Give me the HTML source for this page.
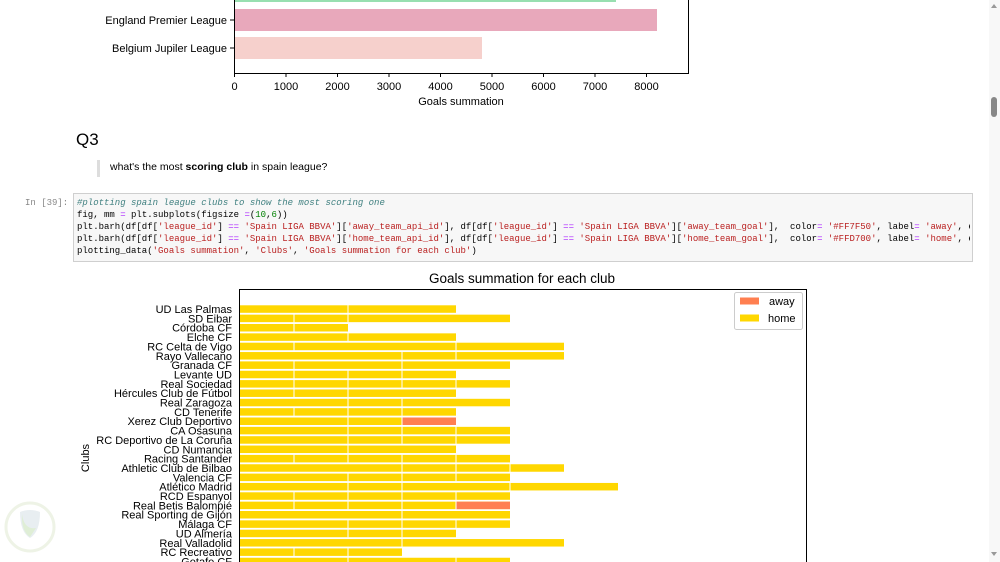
<!DOCTYPE html>
<html><head><meta charset="utf-8"><style>
html,body{margin:0;padding:0;background:#fff;width:1000px;height:562px;overflow:hidden;font-family:"Liberation Sans",sans-serif}
.a{position:absolute;white-space:pre}
.code{font-family:"Liberation Mono",monospace;font-size:9px;line-height:12px;color:#000}
.cm{color:#408080;font-style:italic}.s{color:#ba2121}.o{color:#aa22ff}.n{color:#008000}
</style></head><body>
<svg class="a" style="left:0;top:0" width="1000" height="562" font-family="Liberation Sans, sans-serif">
<rect x="235" y="-20" width="381" height="22" fill="#98dfb0"/>
<rect x="235" y="9" width="422" height="22" fill="#e8a8bb"/>
<rect x="235" y="37" width="247" height="22" fill="#f6d0cc"/>
<line x1="234.5" y1="0" x2="234.5" y2="73" stroke="#000" stroke-width="1"/>
<line x1="688.5" y1="0" x2="688.5" y2="73" stroke="#000" stroke-width="1"/>
<line x1="234" y1="73.5" x2="689" y2="73.5" stroke="#000" stroke-width="1"/>
<g stroke="#000"><line x1="230" y1="20" x2="234" y2="20"/><line x1="230" y1="48" x2="234" y2="48"/>
<line x1="234.5" y1="74" x2="234.5" y2="77"/><line x1="286" y1="74" x2="286" y2="77"/><line x1="337.5" y1="74" x2="337.5" y2="77"/><line x1="389" y1="74" x2="389" y2="77"/><line x1="440.5" y1="74" x2="440.5" y2="77"/><line x1="492" y1="74" x2="492" y2="77"/><line x1="543.5" y1="74" x2="543.5" y2="77"/><line x1="595" y1="74" x2="595" y2="77"/><line x1="646.5" y1="74" x2="646.5" y2="77"/></g>
<g font-size="11" text-anchor="end" fill="#000"><text x="227" y="24">England Premier League</text><text x="227" y="52">Belgium Jupiler League</text></g>
<g font-size="11" text-anchor="middle"><text x="234.5" y="90">0</text><text x="286" y="90">1000</text><text x="337.5" y="90">2000</text><text x="389" y="90">3000</text><text x="440.5" y="90">4000</text><text x="492" y="90">5000</text><text x="543.5" y="90">6000</text><text x="595" y="90">7000</text><text x="646.5" y="90">8000</text>
<text x="461" y="105">Goals summation</text></g>
<text x="522" y="283" font-size="13.5" text-anchor="middle">Goals summation for each club</text>
<rect x="239.5" y="289.5" width="567" height="290" fill="none" stroke="#000"/>
<g font-size="11" text-anchor="end">
<g transform="translate(0,309)"><rect x="240" y="-3.7" width="216" height="7.5" fill="#ffd700"/><path d="M348 -4V4" stroke="#fff"/><text x="232" y="4">UD Las Palmas</text></g>
<g transform="translate(0,318.35)"><rect x="240" y="-3.7" width="270" height="7.5" fill="#ffd700"/><path d="M294 -4V4M348 -4V4" stroke="#fff"/><text x="232" y="4">SD Eibar</text></g>
<g transform="translate(0,327.7)"><rect x="240" y="-3.7" width="108" height="7.5" fill="#ffd700"/><path d="M294 -4V4" stroke="#fff"/><text x="232" y="4">Córdoba CF</text></g>
<g transform="translate(0,337.05)"><rect x="240" y="-3.7" width="216" height="7.5" fill="#ffd700"/><path d="M348 -4V4" stroke="#fff"/><text x="232" y="4">Elche CF</text></g>
<g transform="translate(0,346.4)"><rect x="240" y="-3.7" width="324" height="7.5" fill="#ffd700"/><path d="M294 -4V4M456 -4V4" stroke="#fff"/><text x="232" y="4">RC Celta de Vigo</text></g>
<g transform="translate(0,355.75)"><rect x="240" y="-3.7" width="324" height="7.5" fill="#ffd700"/><path d="M402 -4V4M456 -4V4" stroke="#fff"/><text x="232" y="4">Rayo Vallecano</text></g>
<g transform="translate(0,365.1)"><rect x="240" y="-3.7" width="270" height="7.5" fill="#ffd700"/><path d="M294 -4V4M402 -4V4" stroke="#fff"/><text x="232" y="4">Granada CF</text></g>
<g transform="translate(0,374.45)"><rect x="240" y="-3.7" width="216" height="7.5" fill="#ffd700"/><path d="M294 -4V4M348 -4V4M402 -4V4" stroke="#fff"/><text x="232" y="4">Levante UD</text></g>
<g transform="translate(0,383.8)"><rect x="240" y="-3.7" width="270" height="7.5" fill="#ffd700"/><path d="M294 -4V4M348 -4V4M402 -4V4M456 -4V4" stroke="#fff"/><text x="232" y="4">Real Sociedad</text></g>
<g transform="translate(0,393.15)"><rect x="240" y="-3.7" width="216" height="7.5" fill="#ffd700"/><path d="M294 -4V4M348 -4V4" stroke="#fff"/><text x="232" y="4">Hércules Club de Fútbol</text></g>
<g transform="translate(0,402.5)"><rect x="240" y="-3.7" width="270" height="7.5" fill="#ffd700"/><path d="M348 -4V4M402 -4V4" stroke="#fff"/><text x="232" y="4">Real Zaragoza</text></g>
<g transform="translate(0,411.85)"><rect x="240" y="-3.7" width="216" height="7.5" fill="#ffd700"/><path d="M294 -4V4M348 -4V4M402 -4V4" stroke="#fff"/><text x="232" y="4">CD Tenerife</text></g>
<g transform="translate(0,421.2)"><rect x="240" y="-3.7" width="216" height="7.5" fill="#ffd700"/><rect x="402" y="-3.7" width="54" height="7.5" fill="#ff7f50"/><path d="M348 -4V4M402 -4V4" stroke="#fff"/><text x="232" y="4">Xerez Club Deportivo</text></g>
<g transform="translate(0,430.55)"><rect x="240" y="-3.7" width="270" height="7.5" fill="#ffd700"/><path d="M348 -4V4M402 -4V4M456 -4V4" stroke="#fff"/><text x="232" y="4">CA Osasuna</text></g>
<g transform="translate(0,439.9)"><rect x="240" y="-3.7" width="270" height="7.5" fill="#ffd700"/><path d="M348 -4V4M402 -4V4M456 -4V4" stroke="#fff"/><text x="232" y="4">RC Deportivo de La Coruña</text></g>
<g transform="translate(0,449.25)"><rect x="240" y="-3.7" width="216" height="7.5" fill="#ffd700"/><path d="M348 -4V4" stroke="#fff"/><text x="232" y="4">CD Numancia</text></g>
<g transform="translate(0,458.6)"><rect x="240" y="-3.7" width="270" height="7.5" fill="#ffd700"/><path d="M294 -4V4M348 -4V4M402 -4V4M456 -4V4" stroke="#fff"/><text x="232" y="4">Racing Santander</text></g>
<g transform="translate(0,467.95)"><rect x="240" y="-3.7" width="324" height="7.5" fill="#ffd700"/><path d="M402 -4V4M456 -4V4M510 -4V4" stroke="#fff"/><text x="232" y="4">Athletic Club de Bilbao</text></g>
<g transform="translate(0,477.3)"><rect x="240" y="-3.7" width="270" height="7.5" fill="#ffd700"/><path d="M348 -4V4M402 -4V4M456 -4V4" stroke="#fff"/><text x="232" y="4">Valencia CF</text></g>
<g transform="translate(0,486.65)"><rect x="240" y="-3.7" width="378" height="7.5" fill="#ffd700"/><path d="M348 -4V4M402 -4V4M510 -4V4" stroke="#fff"/><text x="232" y="4">Atlético Madrid</text></g>
<g transform="translate(0,496)"><rect x="240" y="-3.7" width="270" height="7.5" fill="#ffd700"/><path d="M294 -4V4M348 -4V4M402 -4V4M456 -4V4" stroke="#fff"/><text x="232" y="4">RCD Espanyol</text></g>
<g transform="translate(0,505.35)"><rect x="240" y="-3.7" width="270" height="7.5" fill="#ffd700"/><rect x="456" y="-3.7" width="54" height="7.5" fill="#ff7f50"/><path d="M294 -4V4M348 -4V4M402 -4V4M456 -4V4" stroke="#fff"/><text x="232" y="4">Real Betis Balompié</text></g>
<g transform="translate(0,514.7)"><rect x="240" y="-3.7" width="270" height="7.5" fill="#ffd700"/><path d="M402 -4V4" stroke="#fff"/><text x="232" y="4">Real Sporting de Gijón</text></g>
<g transform="translate(0,524.05)"><rect x="240" y="-3.7" width="270" height="7.5" fill="#ffd700"/><path d="M348 -4V4M402 -4V4M456 -4V4" stroke="#fff"/><text x="232" y="4">Málaga CF</text></g>
<g transform="translate(0,533.4)"><rect x="240" y="-3.7" width="216" height="7.5" fill="#ffd700"/><path d="M348 -4V4M402 -4V4" stroke="#fff"/><text x="232" y="4">UD Almería</text></g>
<g transform="translate(0,542.75)"><rect x="240" y="-3.7" width="324" height="7.5" fill="#ffd700"/><path d="M402 -4V4" stroke="#fff"/><text x="232" y="4">Real Valladolid</text></g>
<g transform="translate(0,552.1)"><rect x="240" y="-3.7" width="162" height="7.5" fill="#ffd700"/><path d="M294 -4V4M348 -4V4" stroke="#fff"/><text x="232" y="4">RC Recreativo</text></g>
<g transform="translate(0,561.45)"><rect x="240" y="-3.7" width="270" height="7.5" fill="#ffd700"/><path d="M348 -4V4M456 -4V4" stroke="#fff"/><text x="232" y="4">Getafe CF</text></g>
</g>
<text transform="translate(89,458) rotate(-90)" font-size="11" text-anchor="middle">Clubs</text>
<rect x="734.5" y="292.5" width="68" height="37" rx="2" fill="#fff" stroke="#ccc"/>
<rect x="740" y="297.5" width="19" height="7" fill="#ff7f50"/><text x="769" y="305" font-size="11">away</text>
<rect x="740" y="314.5" width="19" height="7" fill="#ffd700"/><text x="768" y="322" font-size="11">home</text>
<circle cx="30" cy="527" r="24" fill="none" stroke="#eef3e6" stroke-width="3"/>
<path d="M20 512 Q30 508 40 512 Q40 532 30 538 Q20 532 20 512Z" fill="#e8eef1"/>
<path d="M22 514 Q24 530 36 528 Q32 534 30 537 Q21 531 22 514Z" fill="#dfeed6"/>
<rect x="989" y="0" width="11" height="562" fill="#f8f8f8"/>
<rect x="991" y="97" width="6" height="20" rx="3" fill="#888"/>
<path d="M991 8 L994 4 L997 8Z M991 552 L994 556 L997 552Z" fill="#999"/>
</svg>
<div class="a" style="left:76px;top:130px;font-size:17px;color:#000">Q3</div>
<div class="a" style="left:97px;top:160px;width:3px;height:17px;background:#ddd"></div>
<div class="a" style="left:110px;top:161px;font-size:10.5px;color:#000">what's the most <b>scoring club</b> in spain league?</div>
<div class="a code" style="left:25px;top:197px;color:#888">In [39]:</div>
<div class="a" style="left:73px;top:193px;width:898px;height:67px;background:#f7f7f7;border:1px solid #cfcfcf;overflow:hidden"></div>
<div class="a code" style="left:77px;top:197px;width:893px;overflow:hidden"><span class="cm">#plotting spain league clubs to show the most scoring one</span>
fig, mm <span class="o">=</span> plt.subplots(figsize <span class="o">=</span>(<span class="n">10</span>,<span class="n">6</span>))
plt.barh(df[df[<span class="s">'league_id'</span>] <span class="o">==</span> <span class="s">'Spain LIGA BBVA'</span>][<span class="s">'away_team_api_id'</span>], df[df[<span class="s">'league_id'</span>] <span class="o">==</span> <span class="s">'Spain LIGA BBVA'</span>][<span class="s">'away_team_goal'</span>],  color<span class="o">=</span> <span class="s">'#FF7F50'</span>, label<span class="o">=</span> <span class="s">'away'</span>, edgecolor='white')
plt.barh(df[df[<span class="s">'league_id'</span>] <span class="o">==</span> <span class="s">'Spain LIGA BBVA'</span>][<span class="s">'home_team_api_id'</span>], df[df[<span class="s">'league_id'</span>] <span class="o">==</span> <span class="s">'Spain LIGA BBVA'</span>][<span class="s">'home_team_goal'</span>],  color<span class="o">=</span> <span class="s">'#FFD700'</span>, label<span class="o">=</span> <span class="s">'home'</span>, edgecolor='white')
plotting_data(<span class="s">'Goals summation'</span>, <span class="s">'Clubs'</span>, <span class="s">'Goals summation for each club'</span>)</div>
</body></html>
